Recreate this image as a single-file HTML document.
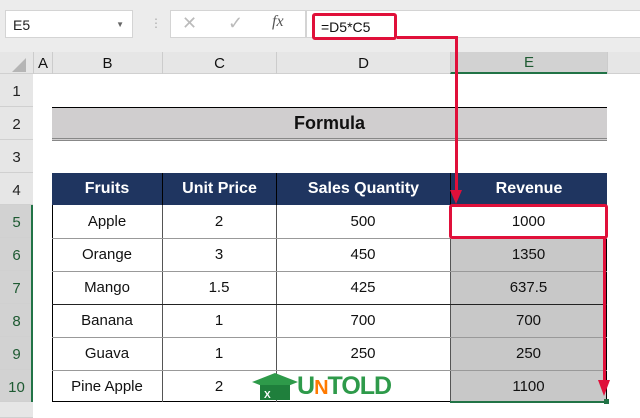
<!DOCTYPE html><html><head><style>
*{margin:0;padding:0;box-sizing:border-box}
body{width:640px;height:418px;overflow:hidden;background:#fff;font-family:"Liberation Sans",sans-serif;position:relative}
.a{position:absolute}
.rh{position:absolute;left:0;width:33px;background:#e6e6e6;border-bottom:1px solid #d0d0d0;text-align:center;font-size:15px;color:#222;padding-top:9px}
.cell{position:absolute;display:flex;align-items:center;justify-content:center;font-size:15px;color:#111}
</style></head><body>
<div class="a" style="left:0;top:0;width:640px;height:52px;background:#ececec"></div>
<div class="a" style="left:5px;top:10px;width:128px;height:28px;background:#fff;border:1px solid #d4d4d4;font-size:14px;padding:6px 0 0 7px;color:#222">E5<span style="position:absolute;right:8px;top:9px;font-size:8px;color:#666">▼</span></div>
<div class="a" style="left:150px;top:16px;color:#aaa;font-size:12px">⋮</div>
<div class="a" style="left:170px;top:10px;width:136px;height:28px;background:#fff;border:1px solid #d4d4d4"></div>
<div class="a" style="left:182px;top:13px;color:#bbb;font-size:18px">✕</div>
<div class="a" style="left:228px;top:13px;color:#bbb;font-size:18px">✓</div>
<div class="a" style="left:272px;top:13px;color:#555;font-size:16px;font-style:italic;font-family:'Liberation Serif',serif">fx</div>
<div class="a" style="left:306px;top:10px;width:340px;height:28px;background:#fff;border:1px solid #d4d4d4"></div>
<div class="a" style="left:312px;top:13px;width:85px;height:27px;border:3px solid #e0103a;border-radius:3px;font-size:14px;padding:3px 0 0 6px;color:#111">=D5*C5</div>
<!-- column headers -->
<div class="a" style="left:0;top:52px;width:640px;height:22px;background:#e6e6e6;border-bottom:1px solid #d0d0d0"></div>
<div class="a" style="left:12px;top:58px;width:0;height:0;border-left:14px solid transparent;border-bottom:14px solid #b5b5b5"></div>
<div class="cell" style="left:33px;top:52px;width:19px;height:22px;border-left:1px solid #ccc">A</div>
<div class="cell" style="left:52px;top:52px;width:110px;height:22px;border-left:1px solid #ccc">B</div>
<div class="cell" style="left:162px;top:52px;width:114px;height:22px;border-left:1px solid #ccc">C</div>
<div class="cell" style="left:276px;top:52px;width:174px;height:22px;border-left:1px solid #ccc">D</div>
<div class="cell" style="left:450px;top:52px;width:157px;height:22px;background:#d2d2d2;border-bottom:2px solid #217346;border-left:1px solid #ccc;color:#1e5a32">E</div>
<div class="a" style="left:607px;top:52px;width:1px;height:22px;background:#ccc"></div>
<!-- row headers -->
<div class="rh" style="top:74px;height:33px">1</div>
<div class="rh" style="top:107px;height:33px">2</div>
<div class="rh" style="top:140px;height:33px">3</div>
<div class="rh" style="top:173px;height:32px">4</div>
<div class="rh" style="top:205px;height:33px;background:#d2d2d2;color:#1e5a32">5</div>
<div class="rh" style="top:238px;height:33px;background:#d2d2d2;color:#1e5a32">6</div>
<div class="rh" style="top:271px;height:33px;background:#d2d2d2;color:#1e5a32">7</div>
<div class="rh" style="top:304px;height:33px;background:#d2d2d2;color:#1e5a32">8</div>
<div class="rh" style="top:337px;height:33px;background:#d2d2d2;color:#1e5a32">9</div>
<div class="rh" style="top:370px;height:32px;background:#d2d2d2;color:#1e5a32">10</div>
<div class="a" style="left:31px;top:205px;width:2px;height:197px;background:#217346"></div>
<div class="rh" style="top:402px;height:16px"></div>
<!-- formula band -->
<div class="cell" style="left:52px;top:107px;width:555px;height:34px;background:#d0cecf;border-top:1px solid #000;border-bottom:3px double #888;font-size:18px;font-weight:bold;color:#111">Formula</div>
<!-- table header -->
<div class="a" style="left:52px;top:173px;width:555px;height:32px;background:#1f3560"></div>
<div class="cell" style="left:52px;top:173px;width:110px;height:32px;color:#fff;font-weight:bold;font-size:16px">Fruits</div>
<div class="cell" style="left:162px;top:173px;width:114px;height:32px;color:#fff;font-weight:bold;font-size:16px;border-left:1px solid #000">Unit Price</div>
<div class="cell" style="left:276px;top:173px;width:174px;height:32px;color:#fff;font-weight:bold;font-size:16px;border-left:1px solid #000">Sales Quantity</div>
<div class="cell" style="left:450px;top:173px;width:157px;height:32px;color:#fff;font-weight:bold;font-size:16px;border-left:1px solid #000">Revenue</div>
<!-- body -->
<div class="a" style="left:450px;top:238px;width:157px;height:164px;background:#c8c8c8"></div>
<div class="a" style="left:52px;top:205px;width:555px;height:197px;border:1px solid #000;border-top:none"></div>
<div class="a" style="left:162px;top:205px;width:1px;height:197px;background:#555"></div>
<div class="a" style="left:276px;top:205px;width:1px;height:197px;background:#555"></div>
<div class="a" style="left:450px;top:205px;width:1px;height:197px;background:#555"></div>
<div class="a" style="left:52px;top:238px;width:555px;height:1px;background:#999"></div>
<div class="a" style="left:52px;top:271px;width:555px;height:1px;background:#999"></div>
<div class="a" style="left:52px;top:304px;width:555px;height:1px;background:#222"></div>
<div class="a" style="left:52px;top:337px;width:555px;height:1px;background:#999"></div>
<div class="a" style="left:52px;top:370px;width:555px;height:1px;background:#999"></div>
<div class="a" style="left:450px;top:401px;width:157px;height:2px;background:#217346"></div>

<div class="cell" style="left:52px;top:205px;width:110px;height:33px">Apple</div><div class="cell" style="left:162px;top:205px;width:114px;height:33px">2</div><div class="cell" style="left:276px;top:205px;width:174px;height:33px">500</div><div class="cell" style="left:450px;top:205px;width:157px;height:33px">1000</div>
<div class="cell" style="left:52px;top:238px;width:110px;height:33px">Orange</div><div class="cell" style="left:162px;top:238px;width:114px;height:33px">3</div><div class="cell" style="left:276px;top:238px;width:174px;height:33px">450</div><div class="cell" style="left:450px;top:238px;width:157px;height:33px">1350</div>
<div class="cell" style="left:52px;top:271px;width:110px;height:33px">Mango</div><div class="cell" style="left:162px;top:271px;width:114px;height:33px">1.5</div><div class="cell" style="left:276px;top:271px;width:174px;height:33px">425</div><div class="cell" style="left:450px;top:271px;width:157px;height:33px">637.5</div>
<div class="cell" style="left:52px;top:304px;width:110px;height:33px">Banana</div><div class="cell" style="left:162px;top:304px;width:114px;height:33px">1</div><div class="cell" style="left:276px;top:304px;width:174px;height:33px">700</div><div class="cell" style="left:450px;top:304px;width:157px;height:33px">700</div>
<div class="cell" style="left:52px;top:337px;width:110px;height:33px">Guava</div><div class="cell" style="left:162px;top:337px;width:114px;height:33px">1</div><div class="cell" style="left:276px;top:337px;width:174px;height:33px">250</div><div class="cell" style="left:450px;top:337px;width:157px;height:33px">250</div>
<div class="cell" style="left:52px;top:370px;width:110px;height:32px">Pine Apple</div><div class="cell" style="left:162px;top:370px;width:114px;height:32px">2</div><div class="cell" style="left:450px;top:370px;width:157px;height:32px">1100</div>
<!-- logo -->
<svg class="a" style="left:250px;top:372px" width="50" height="30"><polygon points="2,10 25,1 48,10 25,19" fill="#2e9a4a"/><rect x="10" y="13" width="30" height="15" fill="#1f7f3c"/><text x="14" y="26" font-size="10" fill="#fff" font-weight="bold" font-family="Liberation Sans">X</text></svg>
<div class="a" style="left:297px;top:372px;font-size:25px;font-weight:900;color:#2e9a4a;letter-spacing:-1px">U<span style="color:#ff7a00;font-size:20px">N</span>TOLD</div>
<!-- red annotations -->
<div class="a" style="left:455px;top:38px;width:3px;height:160px;background:#e0103a"></div>
<div class="a" style="left:397px;top:36px;width:61px;height:3px;background:#e0103a"></div>
<div class="a" style="left:450px;top:190px;width:0;height:0;border-left:6px solid transparent;border-right:6px solid transparent;border-top:14px solid #e0103a"></div>
<div class="a" style="left:449px;top:204px;width:159px;height:35px;border:3px solid #e0103a;border-radius:3px"></div>
<div class="a" style="left:603px;top:238px;width:3px;height:150px;background:#e0103a"></div>
<div class="a" style="left:598px;top:380px;width:0;height:0;border-left:6px solid transparent;border-right:6px solid transparent;border-top:16px solid #e0103a"></div>
<div class="a" style="left:604px;top:399px;width:5px;height:5px;background:#217346"></div>
</body></html>
